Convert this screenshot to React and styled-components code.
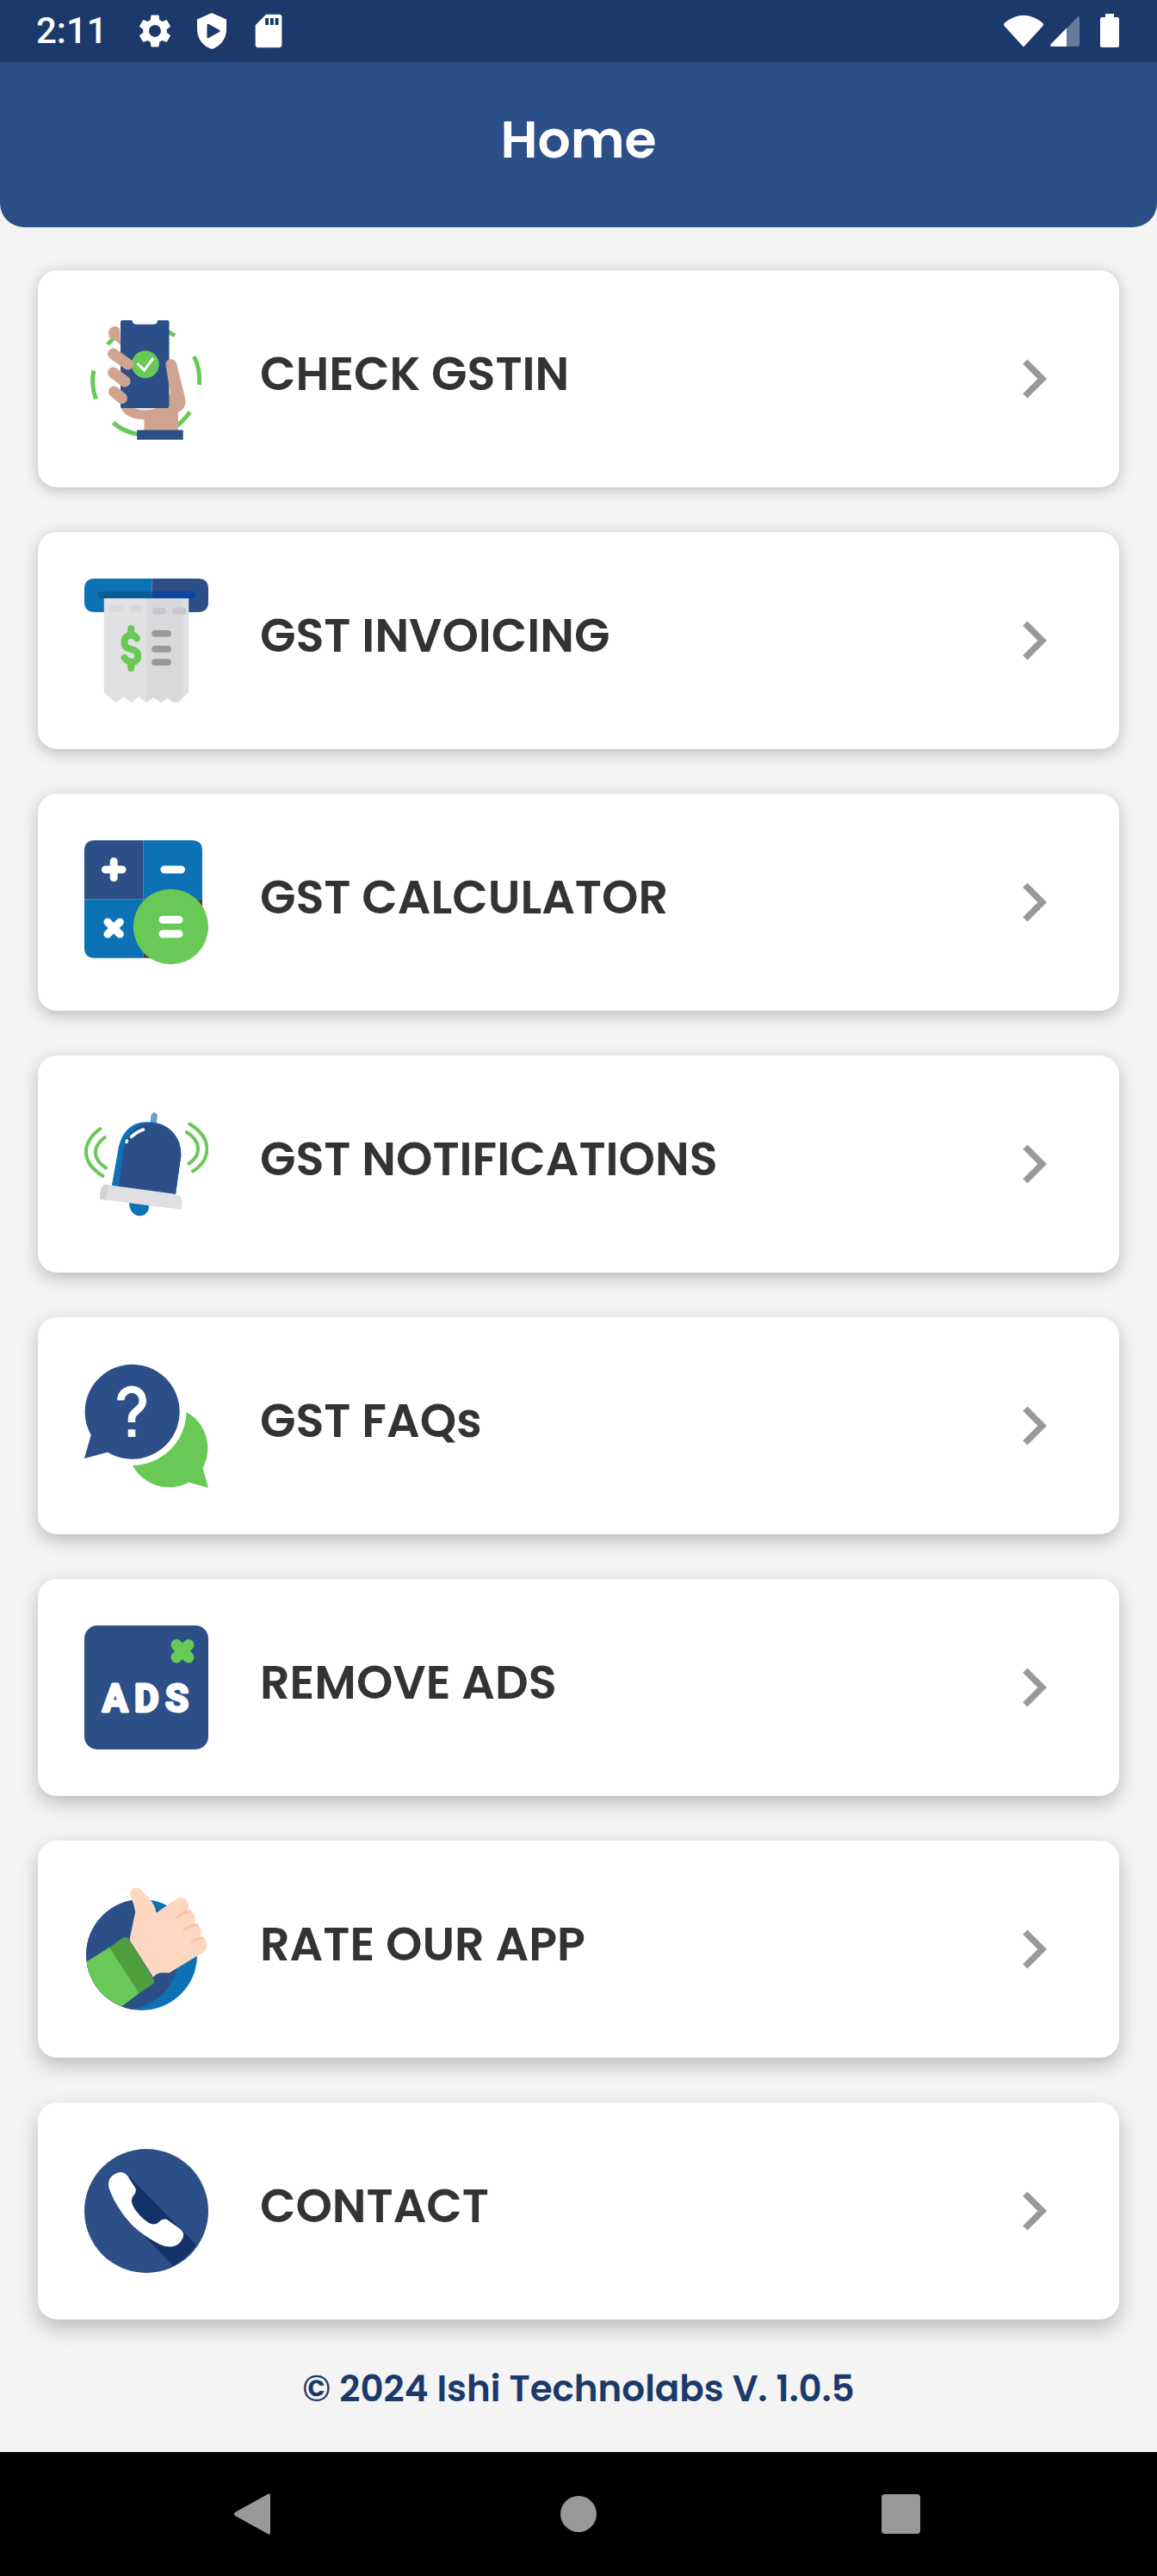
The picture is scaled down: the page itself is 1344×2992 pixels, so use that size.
import React from "react";
import styled, { createGlobalStyle } from "styled-components";

const GlobalStyle = createGlobalStyle`
  *, *::before, *::after { box-sizing: border-box; }
  body { margin: 0; background: #f4f4f4; }
  button { border: 0; padding: 0; background: none; font: inherit; color: inherit; cursor: pointer; }
  svg { display: block; }
`;

const NAVY = "#2b4f86";
const BLUE = "#0d72b5";
const GREEN = "#68c957";
const SKIN = "#cfa592";
const PEACH = "#fdd7bf";

const Screen = styled.div`
  min-height: 100vh;
  display: flex;
  flex-direction: column;
  background: #f4f4f4;
  font-family: Poppins, Inter, "Liberation Sans", sans-serif;
`;

const StatusBar = styled.div`
  display: flex;
  align-items: center;
  justify-content: space-between;
  height: 72px;
  padding: 0 44px 0 42px;
  background: #1b3a6b;
  color: #fff;
`;

const StatusGroup = styled.div`
  display: flex;
  align-items: center;
  gap: ${(p) => p.$gap}px;
`;

const Clock = styled.time`
  margin-right: 12px;
  font: 500 42px/72px Roboto, sans-serif;
`;

const Header = styled.header`
  display: flex;
  align-items: center;
  justify-content: center;
  height: 192px;
  padding-bottom: 12px;
  border-radius: 0 0 28px 28px;
  background: ${NAVY};
  color: #fff;
`;

const Title = styled.h1`
  margin: 0;
  font-size: 60px;
  line-height: 72px;
  font-weight: 600;
`;

const Main = styled.main`
  flex: 1;
  padding: 50px 44px 44px;
`;

const MenuList = styled.ul`
  display: flex;
  flex-direction: column;
  gap: 52px;
  margin: 0;
  padding: 0;
  list-style: none;
`;

const Card = styled.button`
  display: flex;
  align-items: center;
  width: 100%;
  height: 252px;
  padding: 0 54px;
  border-radius: 22px;
  background: #fff;
  box-shadow: 0 ${(p) => 3 + p.$depth}px ${(p) => 16 + p.$depth}px rgba(0, 0, 0, 0.24);
  text-align: left;
`;

const Label = styled.span`
  flex: 1;
  margin-left: 60px;
  padding-bottom: 12px;
  color: #333;
  font-size: 54px;
  line-height: 64px;
  font-weight: 600;
`;

const Copyright = styled.footer`
  margin-top: 52px;
  color: #1b3a6b;
  font-size: 42px;
  line-height: 58px;
  font-weight: 600;
  text-align: center;
`;

const SystemNav = styled.nav`
  display: flex;
  justify-content: center;
  height: 144px;
  background: #000;
`;

const SystemButton = styled.button`
  display: flex;
  flex: 0 0 28%;
  align-items: center;
  justify-content: center;
`;

const Art = ({ children }) => (
  <svg width="144" height="144" viewBox="0 0 144 144" fill="none" aria-hidden="true">
    {children}
  </svg>
);

const CheckArt = () => (
  <Art>
    <g stroke={GREEN} strokeWidth="5">
      <path d="M10.7 62.5A62 62 0 0 0 13.5 95.5" />
      <path d="M127.5 46A62 62 0 0 1 133.5 79" />
      <path d="M27 32Q31 27 37 23" />
      <path d="M97 17L105 22" />
      <path d="M122.5 110.5Q117 119 107 127" />
      <path d="M33.5 123Q46 134 63 136.5" />
    </g>
    <path d="M28 20C28 12 36 8 41 14L42 33Q36 26 29 24Z" fill={SKIN} />
    <path d="M42 104C44 114 56 119 69.500 119.500V133H109V111C117 108 119 99 116.500 92L98 90V106Z" fill={SKIN} />
    <rect x="42" y="4" width="56.500" height="102" rx="2" fill={NAVY} />
    <path d="M55.500 3.500Q56 8.700 60 8.700H81Q85 8.700 85 3.500Q70 -3 55.500 3.500Z" fill="#fff" />
    <path d="M63 6.500H77" stroke="#eee" />
    <path d="M57 106H84Q70 111 57 106Z" fill="#e9e9f5" />
    <circle cx="70.800" cy="55.300" r="16" fill={GREEN} />
    <path d="M61.500 54L69.500 62L80 48" stroke="#fff" strokeWidth="3" />
    <path d="M94.500 56C94 47 107 47 107.500 56L117 94C119 108 108 114 98.500 108C99 96 101 86 98.500 80Z" fill={SKIN} />
    <path d="M33.500 43L50.500 55M33.500 65L47 75M34.500 87L43.500 94.500" stroke={SKIN} strokeWidth="13" strokeLinecap="round" />
    <rect x="61.200" y="131.500" width="53.500" height="11.200" fill={NAVY} />
  </Art>
);

const InvoiceArt = () => (
  <Art>
    <path d="M12 0H78.500V39H12Q0 39 0 27V12Q0 0 12 0Z" fill={BLUE} />
    <path d="M78.500 0H132Q144 0 144 12V27Q144 39 132 39H78.500Z" fill={NAVY} />
    <path d="M78.500 15.300H19.500a4 4 0 0 0 0 8H78.500Z" fill="#075d92" />
    <path d="M78.500 15.300H125a4 4 0 0 1 0 8H78.500Z" fill="#0a47a0" />
    <path d="M22.800 23H121.200V132.300L109 144H103L97 138.700L89 144L80.400 138L71.800 144L62.800 137.300L54.200 144L45.700 137.300L36.300 144L22.800 132.300Z" fill="#e1e1e3" />
    <path d="M71.800 23H114.600V138L105 144L97 138.700L89 144L80.400 138L71.800 144Z" fill="#d9d9db" />
    <rect x="29.500" y="30.500" width="15.500" height="8" rx="3" fill="#d9d9db" />
    <rect x="52" y="30.500" width="16" height="8" rx="4" fill="#d9d9db" />
    <rect x="79" y="33.800" width="16" height="8" rx="4" fill="#c7c7cf" />
    <path d="M106 33.800H118V41.800H106a4 4 0 0 1 0 -8Z" fill="#c7c7cf" />
    <path d="M54.300 58V65M54.300 97V104M61 69.500C56 62.500 46.500 66 46.500 74C46.500 80 50 81 54.300 82C59 83 62.300 84.500 62.300 90C62.300 98 53 100 46.500 92" stroke={GREEN} strokeWidth="8" strokeLinecap="round" strokeLinejoin="round" />
    <g fill="#999">
      <rect x="78.300" y="60" width="22.500" height="7.700" rx="3.500" />
      <rect x="78.300" y="78" width="22.500" height="7.700" rx="3.500" />
      <rect x="78.300" y="93.300" width="22.500" height="7.700" rx="3.500" />
    </g>
  </Art>
);

const CalculatorArt = () => (
  <Art>
    <path d="M68.300 0H125Q137 0 137 12V68.300H68.300Z" fill={BLUE} />
    <path d="M12 0H68.300V68.300H0V12Q0 0 12 0Z" fill={NAVY} />
    <path d="M0 68.300H68.300V136.700H12Q0 136.700 0 124.700Z" fill={BLUE} />
    <path d="M68.300 68.300H137V90L90 136.700H68.300Z" fill="#444" />
    <circle cx="100.400" cy="100.400" r="43.600" fill={GREEN} />
    <path d="M34.200 24.500V43.500M24.500 34H44M93 34H112.500M27 95L41.300 109M41.300 95L27 109M91 92.300H110M91 108.800H110" stroke="#fff" strokeWidth="9" strokeLinecap="round" />
  </Art>
);

const BellArt = () => (
  <Art>
    <g stroke={GREEN} strokeWidth="4" strokeLinecap="round">
      <path d="M18.300 31C-4 48 -4 70 21.500 86" />
      <path d="M23.800 41C9 52 9 66 25 76.500" />
      <path d="M122.300 25.500C149 42 148 66 126 80.500" />
      <path d="M118.800 35C136 45 136 62 121.500 71.500" />
    </g>
    <path d="M76.500 25L77.500 15Q81 9 85 15L83.500 26Z" fill="#6a9fd0" />
    <path d="M52 116L75 120C76 136 52 138 52 116Z" fill={BLUE} />
    <path d="M31.700 98L39.200 56C43 33 57 22 74 23.300C98 23 113 41 112.300 62L106 107Z" fill={BLUE} />
    <path d="M39.500 98L45 60C49 37 62 24 78 24.500C98 25 113 41 112.300 62L106 107Z" fill={NAVY} />
    <path d="M68.500 32Q60 35 54.500 40.500M49.500 45L49 46.500" stroke="#fff" strokeWidth="3.500" strokeLinecap="round" />
    <path d="M25.800 96L106 107Q114 109 113.300 115L112.300 125L17.800 112.700L18.500 105Q20 95 25.800 96Z" fill="#e0e0e3" />
    <path d="M25.800 96Q30 96 27 103L25.500 113.700L17.800 112.700L18.500 105Q20 95 25.800 96Z" fill="#d2d2d6" />
  </Art>
);

const FaqArt = () => (
  <Art>
    <path d="M7.700 82.700A55 55 0 1 1 27 102.700L0 110Z" fill={NAVY} />
    <path d="M118.500 56A48 48 0 0 1 137.500 121L144 144L121.300 137.700A48 48 0 0 1 56 118A63 63 0 0 0 118.500 56Z" fill={GREEN} />
    <path d="M42.300 42.500V42A12.700 12.700 0 1 1 64 51.500L58 57Q55 60 55 64V68" stroke="#fff" strokeWidth="8.500" />
    <rect x="50.700" y="76.300" width="8.600" height="8.600" fill="#fff" />
  </Art>
);

const AdsText = styled.text`
  font: 700 44px Roboto, sans-serif;
  fill: #fff;
  stroke: #fff;
  stroke-width: 3px;
  stroke-linejoin: round;
`;

const AdsArt = () => (
  <Art>
    <rect width="144" height="144" rx="15" fill={NAVY} />
    <path d="M107 22.500L121 37M121 22.500L107 37" stroke={GREEN} strokeWidth="13" strokeLinecap="round" />
    <AdsText x="21 58 94" y="100">ADS</AdsText>
  </Art>
);

const RateArt = () => (
  <Art>
    <clipPath id="rate-disc">
      <circle cx="66.600" cy="78.500" r="64.500" />
    </clipPath>
    <g clipPath="url(#rate-disc)">
      <rect width="144" height="144" fill={BLUE} />
      <circle cx="45" cy="78" r="65" fill={NAVY} />
      <path d="M0 88L29.400 69.700L63.900 123L40 141L0 144Z" fill={GREEN} />
    </g>
    <path d="M80 104.700L52.400 61.300L59.100 29Q58 20 54 11C51 1 62 -3 67 4L77 15Q82 21 83.600 29.700L107 13.500C116 8 124 19 120 26C128 28 130 37 128 42C136 44 137 52 134.500 57C143 59 145 70 139 75L101 98Q99 100 95 99.500Q85 98 80 104.700Z" fill={PEACH} />
    <path d="M108.500 34.500Q115 28 123 28M116 49.500Q123 44 131 44M125 64Q131 58.500 137 59" stroke="#fbc3ab" strokeWidth="3" strokeLinecap="round" />
    <path d="M29.400 69.700L45 58.500Q49 56.500 52 61L81 108Q82 111 79 113L63.900 123Z" fill="#4f9f3f" />
  </Art>
);

const ContactArt = () => (
  <Art>
    <circle cx="72" cy="72" r="72" fill={NAVY} />
    <path d="M52 32L130 111.300Q120 127 102.700 135.700L60 91Z" fill="#143369" />
    <path d="M50 31L59 45Q61 49 58 53Q53 58 55.500 64C59 73 69 82 75 86Q81 89 86 85.500Q91 80 96 82L110 92Q117 97 114.500 103Q111 112 102 113.500Q94 114 88 111C72 103 58 92 51.600 84C41 72 33 58 28.800 46Q26 35 34 30Q43 23.500 50 31Z" fill="#fff" />
  </Art>
);

const Chevron = () => (
  <svg width="90" height="90" viewBox="0 0 24 24" fill="#999" aria-hidden="true">
    <path d="M10 6 8.590 7.410 13.170 12l-4.580 4.590L10 18l6-6z" />
  </svg>
);

const items = [
  { label: "CHECK GSTIN", Icon: CheckArt },
  { label: "GST INVOICING", Icon: InvoiceArt },
  { label: "GST CALCULATOR", Icon: CalculatorArt },
  { label: "GST NOTIFICATIONS", Icon: BellArt },
  { label: "GST FAQs", Icon: FaqArt },
  { label: "REMOVE ADS", Icon: AdsArt },
  { label: "RATE OUR APP", Icon: RateArt },
  { label: "CONTACT", Icon: ContactArt },
];

const GearIcon = () => (
  <svg width="46" height="46" viewBox="0 0 24 24" fill="currentColor" aria-hidden="true">
    <path d="M19.140 12.940c.04-.3.06-.61.06-.94 0-.32-.02-.64-.07-.94l2.030-1.580c.18-.14.23-.41.12-.61l-1.920-3.320c-.12-.22-.37-.29-.59-.22l-2.390.96c-.5-.38-1.030-.7-1.620-.94l-.36-2.540c-.04-.24-.24-.41-.48-.41h-3.840c-.24 0-.43.17-.47.41l-.36 2.540c-.59.24-1.130.57-1.620.94l-2.390-.96c-.22-.08-.47 0-.59.22L2.740 8.870c-.12.21-.08.47.12.61l2.030 1.580c-.05.3-.09.63-.09.94s.02.64.07.94l-2.030 1.580c-.18.14-.23.41-.12.61l1.920 3.320c.12.22.37.29.59.22l2.390-.96c.5.38 1.030.7 1.620.94l.36 2.540c.05.24.24.41.48.41h3.840c.24 0 .44-.17.47-.41l.36-2.540c.59-.24 1.130-.56 1.620-.94l2.390.96c.22.08.47 0 .59-.22l1.920-3.320c.12-.22.07-.47-.12-.61l-2.010-1.580zM12 15.600c-1.980 0-3.600-1.620-3.600-3.600s1.620-3.600 3.600-3.600 3.600 1.620 3.600 3.600-1.620 3.600-3.600 3.600z" />
  </svg>
);

const ShieldIcon = () => (
  <svg width="46" height="46" viewBox="0 0 46 46" fill="currentColor" aria-hidden="true">
    <path fillRule="evenodd" d="M23 2L40 9.500V21C40 32 33 41 23 44C13 41 6 32 6 21V9.500ZM17.500 16V30Q17.500 32 19.500 31L32 24Q33.500 23 32 22L19.500 15Q17.500 14 17.500 16Z" />
  </svg>
);

const SdCardIcon = () => (
  <svg width="46" height="46" viewBox="0 0 24 24" fill="currentColor" aria-hidden="true">
    <path d="M18.500 2h-8L4.020 8.500V20.500c0 .9.600 1.500 1.500 1.500h13c.9 0 1.500-.6 1.500-1.500V3.500c0-.9-.6-1.500-1.500-1.500zM12 8.300h-2V4.200h2v4.100zm3 0h-2V4.200h2v4.100zm3 0h-2V4.200h2v4.100z" />
  </svg>
);

const WifiIcon = () => (
  <svg width="46" height="40" viewBox="0 0 46 40" fill="currentColor" aria-hidden="true">
    <path d="M1 10.500Q23 -7 45 10.500Q46.500 12 45.500 14L24.500 37Q23 39 21.500 37L.5 14Q-.5 12 1 10.500Z" />
  </svg>
);

const SignalIcon = () => (
  <svg width="34" height="40" viewBox="0 0 34 40" fill="currentColor" aria-hidden="true">
    <path d="M19 17L32 3.500Q34 2 34 4.500V36Q34 38 32 38H19Z" opacity=".33" />
    <path d="M19 16.500V38H1.500Q-.5 38 .5 35.500Z" />
  </svg>
);

const BatteryIcon = () => (
  <svg width="22" height="40" viewBox="0 0 22 40" fill="currentColor" aria-hidden="true">
    <path d="M6 0H16V4H20Q22 4 22 6V37Q22 39 20 39H2Q0 39 0 37V6Q0 4 2 4H6Z" />
  </svg>
);

export default function App() {
  return (
    <Screen>
      <GlobalStyle />
      <StatusBar>
        <StatusGroup $gap={20}>
          <Clock>2:11</Clock>
          <GearIcon />
          <ShieldIcon />
          <SdCardIcon />
        </StatusGroup>
        <StatusGroup $gap={8}>
          <WifiIcon />
          <StatusGroup $gap={24}>
            <SignalIcon />
            <BatteryIcon />
          </StatusGroup>
        </StatusGroup>
      </StatusBar>
      <Header>
        <Title>Home</Title>
      </Header>
      <Main>
        <MenuList>
          {items.map(({ label, Icon }, index) => (
            <li key={label}>
              <Card type="button" $depth={index}>
                <Icon />
                <Label>{label}</Label>
                <Chevron />
              </Card>
            </li>
          ))}
        </MenuList>
        <Copyright>© 2024 Ishi Technolabs V. 1.0.5</Copyright>
      </Main>
      <SystemNav aria-label="System">
        <SystemButton type="button" aria-label="Back">
          <svg width="48" height="48" viewBox="0 0 48 48" fill="#999">
            <path d="M1 22L39 1Q42 -1 42 3V45Q42 49 39 47L1 26Q-1 24 1 22Z" />
          </svg>
        </SystemButton>
        <SystemButton type="button" aria-label="Home">
          <svg width="48" height="48" viewBox="0 0 48 48" fill="#999">
            <circle cx="24" cy="24" r="21" />
          </svg>
        </SystemButton>
        <SystemButton type="button" aria-label="Recent apps">
          <svg width="48" height="48" viewBox="0 0 48 48" fill="#999">
            <rect y="1" width="45" height="46" rx="4" />
          </svg>
        </SystemButton>
      </SystemNav>
    </Screen>
  );
}
